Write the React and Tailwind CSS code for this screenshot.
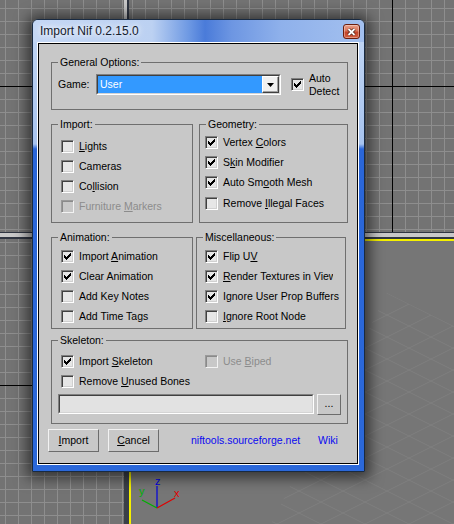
import React from "react";

// checkbox, classic sunken look
function Check({ on, off }) {
  return (
    <span
      className={
        off
          ? "relative shrink-0 w-[13px] h-[13px] border border-t-[#9a9a9a] border-l-[#9a9a9a] border-b-[#f2f2f2] border-r-[#f2f2f2] bg-[#c8c8c8] shadow-[inset_1px_1px_0_#8a8a8a]"
          : "relative shrink-0 w-[13px] h-[13px] border border-t-[#808080] border-l-[#808080] border-b-white border-r-white bg-[#e6e6e6] shadow-[inset_1px_1px_0_#404040,inset_-1px_-1px_0_#d0d0d0]"
      }
    >
      {on && (
        <svg className="absolute left-0 top-0" width="11" height="11" viewBox="1 1 11 11" shapeRendering="crispEdges">
          <path d="M3 5h1v3h-1zM4 6h1v3h-1zM5 7h1v3h-1zM6 6h1v3h-1zM7 5h1v3h-1zM8 4h1v3h-1zM9 3h1v3h-1z" fill="#000" />
        </svg>
      )}
    </span>
  );
}

function Opt({ on, off, className, children }) {
  return (
    <div className={`flex items-center h-[20px] gap-[5px] ${className || ""}`}>
      <Check on={on} off={off} />
      <span className={off ? "whitespace-nowrap text-[#8c8c8c]" : "whitespace-nowrap text-black"}>{children}</span>
    </div>
  );
}

function Group({ title, className, children }) {
  return (
    <fieldset className={`border border-[#6f6f6f] min-w-0 ${className || ""}`}>
      <legend className="ml-[6px] px-[2px] leading-[13px]">{title}</legend>
      {children}
    </fieldset>
  );
}

function Btn({ children, className }) {
  return (
    <button
      className={`flex items-center justify-center bg-[#c8c8c8] border border-t-[#f2f2f2] border-l-[#f2f2f2] border-r-[#6c6c6c] border-b-[#6c6c6c] text-black ${className || ""}`}
    >
      {children}
    </button>
  );
}

function Combo() {
  return (
    <div className="w-[185px] h-[21px] border border-t-[#808080] border-l-[#808080] border-b-white border-r-white">
      <div className="h-full flex border border-t-[#404040] border-l-[#404040] border-b-[#d4d4d4] border-r-[#d4d4d4] bg-white">
        <div className="flex-1 flex items-center pl-[2px] bg-[#3399ff] text-white">User</div>
        <div className="w-[17px] flex items-center justify-center bg-[#f0f0f0] border border-t-white border-l-white border-r-[#404040] border-b-[#404040] shadow-[inset_-1px_-1px_0_#a0a0a0]">
          <svg width="7" height="4" viewBox="0 0 7 4">
            <polygon points="0,0 7,0 3.5,4" fill="#000" />
          </svg>
        </div>
      </div>
    </div>
  );
}

function Perspective() {
  const ks = [0, 1, 2, 3, 4, 5, 6, 7, 8, 9, 10, 11, 12, 13];
  return (
    <svg className="absolute left-0 top-0" width="323" height="283" viewBox="0 0 323 283">
      <defs>
        <clipPath id="wedge">
          <polygon points="256,52 323,85 323,283 140,283" />
        </clipPath>
      </defs>
      <g clipPath="url(#wedge)" stroke="#7f7f7f" strokeWidth="1">
        {ks.map((k) => (
          <line key={"a" + k} x1="0" y1={52 - 128 + k * 22} x2="323" y2={52 - 128 + 161.5 + k * 22} />
        ))}
        {ks.map((k) => (
          <line key={"b" + k} x1="0" y1={52 + 128 + k * 22} x2="323" y2={52 + 128 - 161.5 + k * 22} />
        ))}
      </g>
      {/* axis tripod */}
      <line x1="26" y1="245" x2="26" y2="267" stroke="#0000e0" strokeWidth="1.2" />
      <line x1="26" y1="267" x2="44" y2="257" stroke="#e00000" strokeWidth="1.2" />
      <line x1="26" y1="267" x2="11" y2="259" stroke="#00b000" strokeWidth="1.2" />
      <text x="24" y="244" fontSize="11" fill="#0000e0" fontFamily="Liberation Sans, sans-serif">z</text>
      <text x="43" y="256" fontSize="11" fill="#e00000" fontFamily="Liberation Sans, sans-serif">x</text>
      <text x="8" y="254" fontSize="11" fill="#00b000" fontFamily="Liberation Sans, sans-serif">y</text>
    </svg>
  );
}

export default function App() {
  return (
    <div className="relative w-[454px] h-[524px] overflow-hidden grid grid-cols-[124px_5px_325px] grid-rows-[232px_7px_285px] bg-[#2f3541] font-[family-name:'Liberation_Sans',Arial,sans-serif]">
      {/* viewports */}
      <div className="relative bg-[#737373] bg-[linear-gradient(to_right,#8e8e8e_1px,transparent_1px),linear-gradient(to_bottom,#8e8e8e_1px,transparent_1px)] bg-[length:13px_13px] bg-size-[13px_13px] bg-[position:5px_8px] bg-position-[5px_8px]">
        <div className="absolute left-0 right-0 top-[86px] h-px bg-black" />
      </div>
      <div className="bg-[#c8c8c8] border-r-2 border-[#2f3541]" />
      <div className="relative bg-[#737373] bg-[linear-gradient(to_right,#8e8e8e_1px,transparent_1px),linear-gradient(to_bottom,#8e8e8e_1px,transparent_1px)] bg-[length:13px_13px] bg-size-[13px_13px] bg-[position:3px_8px] bg-position-[3px_8px]">
        <div className="absolute left-0 right-0 top-[86px] h-px bg-black" />
        <div className="absolute top-0 bottom-0 left-[263px] w-px bg-black" />
      </div>
      <div className="col-span-3 bg-[#c8c8c8] border-t border-b-2 border-[#2f3541]" />
      <div className="relative bg-[#737373] bg-[linear-gradient(to_right,#8e8e8e_1px,transparent_1px),linear-gradient(to_bottom,#8e8e8e_1px,transparent_1px)] bg-[length:13px_13px] bg-size-[13px_13px] bg-[position:5px_3px] bg-position-[5px_3px]">
        <div className="absolute left-0 right-0 top-[146px] h-px bg-black" />
      </div>
      <div className="bg-[#3a3f48]" />
      <div className="relative bg-[#767676] border-t-2 border-l-2 border-[#f5f000] overflow-hidden">
        <Perspective />
      </div>

      {/* dialog window */}
      <div className="absolute left-[32px] top-[19px] w-[333px] h-[453px] flex flex-col rounded-t-[6px] border border-[#182a42] bg-[linear-gradient(180deg,#c3d7f4_0px,#a7c3ee_124px,#2a66d9_129px,#2b68d9_100%)] shadow-[0_1px_14px_5px_rgba(0,0,0,0.55)]">
        <div className="h-[22px] shrink-0 flex items-start rounded-t-[5px] bg-[linear-gradient(90deg,#c4d7f4_0%,#bcd1f2_36%,#6e99e3_47%,#4a7bd9_52%,#6d96e2_60%,#8fb1eb_75%,#a3c0ef_100%)]">
          <span className="ml-[7px] mt-[4px] text-[12px] leading-[14px] text-[#15202c] [text-shadow:0_0_5px_#fff,0_0_9px_#fff]">
            Import Nif 0.2.15.0
          </span>
          <div className="ml-auto mr-[4px] mt-[4px] w-[17px] h-[15px] flex items-center justify-center rounded-[3px] border border-[#6b1d0c] bg-[linear-gradient(180deg,#eaa08a_0%,#d9745a_45%,#c2442a_55%,#d45e40_100%)] shadow-[inset_0_0_0_1px_rgba(255,255,255,0.35)]">
            <svg width="9" height="8" viewBox="0 0 9 8">
              <path d="M1.5 1 L7.5 7 M7.5 1 L1.5 7" stroke="#4a1a10" strokeWidth="3.2" />
              <path d="M1.5 1 L7.5 7 M7.5 1 L1.5 7" stroke="#fff" strokeWidth="1.8" />
            </svg>
          </div>
        </div>

        <div className="flex-1 flex flex-col ml-[4px] mr-[5px] mb-[6px] border border-white">
          <div className="flex-1 border border-black bg-[#c8c8c8] text-[10.5px] leading-[13px] text-black">
            <div className="pt-[12px] pl-[12px]">
              <Group title="General Options:" className="w-[297px] h-[54px]">
                <div className="flex items-center h-[27px] mt-[2px] pl-[6px]">
                  <span className="w-[38px]">Game:</span>
                  <Combo />
                  <span className="ml-[10px] flex">
                    <Check on />
                  </span>
                  <span className="ml-[5px] leading-[13px]">
                    Auto
                    <br />
                    Detect
                  </span>
                </div>
              </Group>

              <div className="flex mt-[8px]">
                <Group title="Import:" className="w-[142px] h-[105px]">
                  <div className="pt-[5px] pl-[9px]">
                    <Opt><u>L</u>ights</Opt>
                    <Opt>Cameras</Opt>
                    <Opt>Co<u>l</u>lision</Opt>
                    <Opt off>Furniture <u>M</u>arkers</Opt>
                  </div>
                </Group>
                <Group title="Geometry:" className="w-[149px] h-[105px] ml-[6px]">
                  <div className="pt-[1px] pl-[5px]">
                    <Opt on>Vertex <u>C</u>olors</Opt>
                    <Opt on>S<u>k</u>in Modifier</Opt>
                    <Opt on>Auto Sm<u>o</u>oth Mesh</Opt>
                    <Opt className="mt-[1px]">Remove <u>I</u>llegal Faces</Opt>
                  </div>
                </Group>
              </div>

              <div className="flex mt-[8px]">
                <Group title="Animation:" className="w-[142px] h-[98px]">
                  <div className="pt-[2px] pl-[9px]">
                    <Opt on>Import <u>A</u>nimation</Opt>
                    <Opt on>Clear Animation</Opt>
                    <Opt>Add Key Notes</Opt>
                    <Opt>Add Time Tags</Opt>
                  </div>
                </Group>
                <Group title="Miscellaneous:" className="w-[150px] h-[98px] ml-[3px]">
                  <div className="pt-[2px] pl-[8px]">
                    <Opt on>Flip U<u>V</u></Opt>
                    <Opt on>
                      <span className="block w-[110px] overflow-hidden">
                        <u>R</u>ender Textures in View
                      </span>
                    </Opt>
                    <Opt on>Ignore User Prop Buffers</Opt>
                    <Opt><u>I</u>gnore Root Node</Opt>
                  </div>
                </Group>
              </div>

              <Group title="Skeleton:" className="w-[297px] h-[90px] mt-[5px]">
                <div className="pt-[4px]">
                  <div className="flex pl-[9px]">
                    <Opt on className="w-[144px]">Import <u>S</u>keleton</Opt>
                    <Opt off>Use <u>B</u>iped</Opt>
                  </div>
                  <Opt className="pl-[9px]">Remove <u>U</u>nused Bones</Opt>
                  <div className="flex items-start mt-[3px] pl-[6px]">
                    <div className="w-[256px] h-[20px] border border-t-[#808080] border-l-[#808080] border-b-white border-r-white">
                      <div className="h-full border border-t-[#404040] border-l-[#404040] border-b-[#d4d4d4] border-r-[#d4d4d4] bg-[#e2e2e2]" />
                    </div>
                    <Btn className="ml-[3px] w-[24px] h-[21px] pb-[3px]">...</Btn>
                  </div>
                </div>
              </Group>
            </div>

            <div className="flex items-center mt-[5px] pl-[9px]">
              <Btn className="w-[51px] h-[23px]"><span><u>I</u>mport</span></Btn>
              <Btn className="w-[51px] h-[23px] ml-[9px]"><span><u>C</u>ancel</span></Btn>
              <span className="ml-[32px] w-[127px] text-[#0a0af0]">niftools.sourceforge.net</span>
              <span className="text-[#0a0af0]">Wiki</span>
            </div>
          </div>
        </div>
      </div>
    </div>
  );
}
